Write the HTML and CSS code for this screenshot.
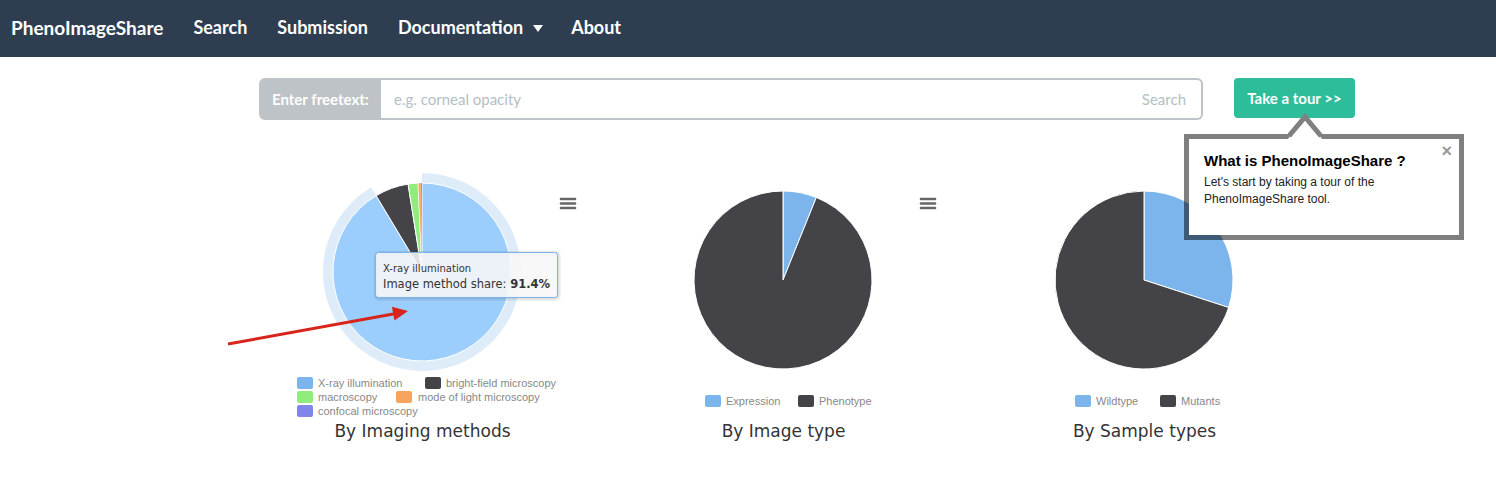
FILE: index.html
```html
<!DOCTYPE html>
<html>
<head>
<meta charset="utf-8">
<title>PhenoImageShare</title>
<link rel="stylesheet" href="styles.css">
</head>
<body>
<nav class="navbar">
  <a class="nav-item brand">PhenoImageShare</a>
  <a class="nav-item">Search</a>
  <a class="nav-item">Submission</a>
  <a class="nav-item dropdown">Documentation<span class="caret"></span></a>
  <a class="nav-item">About</a>
</nav>

<div class="search-row">
  <div class="search-group">
    <span class="addon">Enter freetext:</span>
    <div class="search-input">
      <span class="placeholder">e.g. corneal opacity</span>
      <span class="search-btn">Search</span>
    </div>
  </div>
  <button class="tour-btn">Take a tour &gt;&gt;</button>
</div>

<div class="charts">
  <div class="chart">
    <svg class="chart-svg" width="361" height="260" viewBox="0 0 361 260">
      <path d="M180,13 A99,99 0 1,1 129.01,27.14 L134.16,35.71 A89,89 0 1,0 180,23 Z" fill="#7cb5ec" fill-opacity="0.25"/>
      <path d="M180,112 L180,23 A89,89 0 1,1 134.16,35.71 Z" fill="#9bcefd" stroke="#fff" stroke-width="1"/>
      <path d="M180,112 L134.16,35.71 A89,89 0 0,1 166.08,24.09 Z" fill="#434348" stroke="#fff" stroke-width="1"/>
      <path d="M180,112 L166.08,24.09 A89,89 0 0,1 176.12,23.08 Z" fill="#90ed7d" stroke="#fff" stroke-width="1"/>
      <path d="M180,112 L176.12,23.08 A89,89 0 0,1 179.07,23 Z" fill="#f7a35c" stroke="#fff" stroke-width="0.5"/>
      <path d="M180,112 L179.07,23 A89,89 0 0,1 180,23 Z" fill="#8085e9"/>

      <g class="menu-icon">
        <line x1="319" y1="39" x2="333" y2="39"/>
        <line x1="319" y1="43.5" x2="333" y2="43.5"/>
        <line x1="319" y1="48" x2="333" y2="48"/>
      </g>

      <g class="legend">
        <rect x="55" y="217" width="16" height="12" rx="2" fill="#7cb5ec"/>
        <text x="76" y="227">X-ray illumination</text>
        <rect x="183" y="217" width="16" height="12" rx="2" fill="#434348"/>
        <text x="204" y="227">bright-field microscopy</text>
        <rect x="55" y="231" width="16" height="12" rx="2" fill="#90ed7d"/>
        <text x="76" y="241">macroscopy</text>
        <rect x="154" y="231" width="16" height="12" rx="2" fill="#f7a35c"/>
        <text x="176" y="241">mode of light microscopy</text>
        <rect x="55" y="245" width="16" height="12" rx="2" fill="#8085e9"/>
        <text x="76" y="255">confocal microscopy</text>
      </g>

      <g class="annotation">
        <line x1="-14" y1="184" x2="154" y2="153.5" stroke="#d8251b" stroke-width="3"/>
        <polygon points="166,151 149.9,146.8 152.5,160.6" fill="#d8251b"/>
      </g>

      <g class="tooltip">
        <rect x="134.5" y="93.5" width="182" height="45" rx="3" fill="none" stroke="rgba(0,0,0,0.05)" stroke-width="5"/>
        <rect x="134" y="93" width="182" height="45" rx="3" fill="none" stroke="rgba(0,0,0,0.08)" stroke-width="3"/>
        <rect x="133.5" y="92.5" width="182" height="45" rx="3" fill="rgba(247,247,247,0.88)" stroke="#7cb5ec" stroke-width="1"/>
        <text x="141" y="111.5" class="tt-small">X-ray illumination</text>
        <text x="141" y="128" class="tt-main">Image method share: <tspan font-weight="bold">91.4%</tspan></text>
      </g>
    </svg>
    <div class="chart-title">By Imaging methods</div>
  </div>

  <div class="chart">
    <svg class="chart-svg" width="361" height="260" viewBox="0 0 361 260">
      <path d="M180,120 L180,31 A89,89 0 0,1 213.34,37.48 Z" fill="#7cb5ec" stroke="#fff" stroke-width="1"/>
      <path d="M180,120 L213.34,37.48 A89,89 0 1,1 180,31 Z" fill="#434348" stroke="#fff" stroke-width="1"/>

      <g class="menu-icon">
        <line x1="318" y1="39" x2="332" y2="39"/>
        <line x1="318" y1="43.5" x2="332" y2="43.5"/>
        <line x1="318" y1="48" x2="332" y2="48"/>
      </g>

      <g class="legend">
        <rect x="102" y="235" width="16" height="12" rx="2" fill="#7cb5ec"/>
        <text x="123" y="245">Expression</text>
        <rect x="195" y="235" width="16" height="12" rx="2" fill="#434348"/>
        <text x="216" y="245">Phenotype</text>
      </g>
    </svg>
    <div class="chart-title">By Image type</div>
  </div>

  <div class="chart">
    <svg class="chart-svg" width="361" height="260" viewBox="0 0 361 260">
      <path d="M180,120 L180,31 A89,89 0 0,1 264.65,147.5 Z" fill="#7cb5ec" stroke="#fff" stroke-width="1"/>
      <path d="M180,120 L264.65,147.5 A89,89 0 1,1 180,31 Z" fill="#434348" stroke="#fff" stroke-width="1"/>

      <g class="legend">
        <rect x="111" y="235" width="16" height="12" rx="2" fill="#7cb5ec"/>
        <text x="132" y="245">Wildtype</text>
        <rect x="196" y="235" width="16" height="12" rx="2" fill="#434348"/>
        <text x="217" y="245">Mutants</text>
      </g>
    </svg>
    <div class="chart-title">By Sample types</div>
  </div>
</div>

<div class="popover">
  <svg class="popover-arrow" width="36" height="28" viewBox="0 0 36 28">
    <polygon points="0,26 17,3 34,26" fill="#fff"/>
    <polyline points="1,23 17,4 33,23" fill="none" stroke="#808080" stroke-width="5"/>
  </svg>
  <span class="popover-close">&times;</span>
  <h3 class="popover-title">What is PhenoImageShare ?</h3>
  <p class="popover-text">Let's start by taking a tour of the<br>PhenoImageShare tool.</p>
</div>
</body>
</html>
```

FILE: styles.css
```css
* {
  box-sizing: border-box;
}

body {
  margin: 0;
  font-family: Lato, "Liberation Sans", sans-serif;
  background: #fff;
  width: 1496px;
  height: 485px;
  overflow: hidden;
  position: relative;
}

/* Navbar */
.navbar {
  height: 57px;
  background: #2e3e50;
  display: flex;
  align-items: center;
  padding: 0 0 3px 11px;
  gap: 30px;
}

.nav-item {
  color: #fff;
  font-size: 18px;
  font-weight: 700;
  text-decoration: none;
  display: flex;
  align-items: center;
}

.brand {
  font-size: 19px;
}

.dropdown {
  margin-right: -2px;
}

.caret {
  display: inline-block;
  width: 0;
  height: 0;
  border-top: 7px solid #fff;
  border-left: 5.5px solid transparent;
  border-right: 5.5px solid transparent;
  margin-left: 10px;
  margin-top: 2px;
}

/* Search row */
.search-row {
  display: flex;
  align-items: flex-start;
  margin-top: 21px;
  padding-left: 259px;
}

.search-group {
  display: flex;
  width: 944px;
  height: 42px;
}

.addon {
  width: 122px;
  background: #bdc3c7;
  color: #fff;
  font-size: 15px;
  font-weight: 700;
  display: flex;
  align-items: center;
  padding-left: 13px;
  border-radius: 6px 0 0 6px;
}

.search-input {
  flex: 1;
  border: 2px solid #bdc3c7;
  border-left: none;
  border-radius: 0 6px 6px 0;
  display: flex;
  align-items: center;
  justify-content: space-between;
  padding: 0 15px 0 13px;
  font-size: 15px;
  color: #b4bec6;
}

.tour-btn {
  margin-left: 31px;
  width: 121px;
  height: 40px;
  background: #2ebd9b;
  color: #fff;
  border: none;
  border-radius: 4px;
  font-family: Lato, "Liberation Sans", sans-serif;
  font-size: 15px;
  font-weight: 700;
  padding: 0;
}

/* Charts */
.charts {
  display: flex;
  padding-left: 242px;
  margin-top: 40px;
}

.chart {
  width: 361px;
}

.chart-svg {
  display: block;
  overflow: visible;
}

.menu-icon line {
  stroke: #666;
  stroke-width: 2.6;
  stroke-linecap: round;
}

.legend text {
  font-family: "Liberation Sans", Arial, sans-serif;
  font-size: 11px;
  fill: #888;
}

.tt-small {
  font-family: "DejaVu Sans", sans-serif;
  font-size: 10px;
  fill: #333;
}

.tt-main {
  font-family: "DejaVu Sans", sans-serif;
  font-size: 11.5px;
  fill: #333;
}

.chart-title {
  text-align: center;
  font-family: "DejaVu Sans", sans-serif;
  font-size: 17px;
  color: #333;
  line-height: 22px;
}

/* Popover */
.popover {
  position: absolute;
  left: 1184px;
  top: 134px;
  width: 280px;
  height: 106px;
  background: #fff;
  background-clip: padding-box;
  border: 5px solid rgba(0, 0, 0, 0.5);
  padding: 12px 15px 0 15px;
  font-family: "Liberation Sans", Arial, sans-serif;
}

.popover-arrow {
  position: absolute;
  left: 99px;
  top: -26px;
}

.popover-close {
  position: absolute;
  right: 7px;
  top: 2px;
  font-size: 18px;
  font-weight: 700;
  color: #999;
  line-height: 20px;
}

.popover-title {
  margin: 0;
  font-size: 15px;
  font-weight: 700;
  line-height: 20px;
  color: #000;
}

.popover-text {
  margin: 3px 0 0 0;
  font-size: 12px;
  line-height: 17px;
  color: #222;
}
```
